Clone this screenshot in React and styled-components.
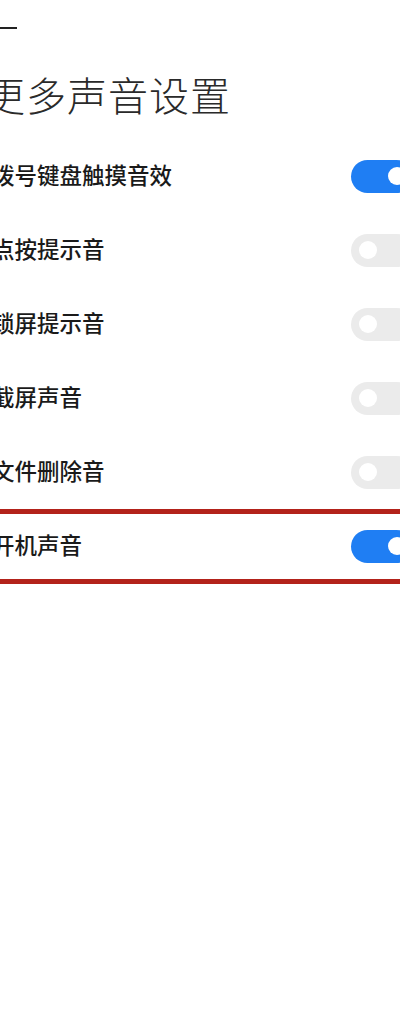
import React from "react";
import styled, { createGlobalStyle } from "styled-components";

const Global = createGlobalStyle`
  html, body { margin: 0; padding: 0; background: #ffffff; }
  body {
    width: 400px;
    min-height: 1011px;
    overflow: hidden;
    font-family: "Noto Sans CJK SC", "Noto Sans", sans-serif;
  }
`;

const Screen = styled.div`
  width: 400px;
  height: 1011px;
  overflow: hidden;
  background: #ffffff;
`;

const Content = styled.div`
  width: 416px;
  margin-left: -3px;
  display: flex;
  flex-direction: column;
`;

const TopBar = styled.div`
  height: 20px;
  padding-top: 18px;
  display: flex;
  align-items: center;
`;

const BackIcon = styled.svg`
  display: block;
  margin-left: -7px;
  width: 30px;
  height: 20px;
`;

const Title = styled.h1`
  margin: 36px 0 25px -12px;
  font-size: 40px;
  line-height: 40px;
  height: 40px;
  font-weight: 300;
  color: #2a2a2a;
  letter-spacing: 1px;
  white-space: nowrap;
`;

const List = styled.div`
  display: flex;
  flex-direction: column;
`;

const Row = styled.div`
  position: relative;
  height: 74px;
  display: flex;
  align-items: center;
  justify-content: space-between;

  ${(p) =>
    p.$highlight &&
    `
    &::after {
      content: "";
      position: absolute;
      left: -20px;
      right: -20px;
      top: 0;
      bottom: -1px;
      border-top: 5px solid #b3221a;
      border-bottom: 5px solid #b3221a;
      pointer-events: none;
    }
  `}
`;

const Label = styled.span`
  margin-left: -5px;
  padding-bottom: 4px;
  font-size: 22.5px;
  font-weight: 500;
  color: #1a1a1a;
  line-height: 30px;
  white-space: nowrap;
`;

const Toggle = styled.div`
  position: relative;
  width: 62px;
  height: 33px;
  border-radius: 17px;
  background: ${(p) => (p.$on ? "#1f7ef3" : "#ebebeb")};
  flex-shrink: 0;

  &::before {
    content: "";
    position: absolute;
    top: 7.5px;
    ${(p) => (p.$on ? "right: 7.5px;" : "left: 7.5px;")}
    width: 18px;
    height: 18px;
    border-radius: 50%;
    background: #ffffff;
  }
`;

const items = [
  { label: "拨号键盘触摸音效", on: true },
  { label: "点按提示音", on: false },
  { label: "锁屏提示音", on: false },
  { label: "截屏声音", on: false },
  { label: "文件删除音", on: false },
  { label: "开机声音", on: true, highlight: true },
];

export default function App() {
  return (
    <Screen>
      <Global />
      <Content>
        <TopBar>
          <BackIcon viewBox="0 0 30 20" fill="none">
            <path
              d="M1 10 H27 M1 10 L9 2 M1 10 L9 18"
              stroke="#222"
              strokeWidth="2"
              strokeLinecap="butt"
            />
          </BackIcon>
        </TopBar>
        <Title>更多声音设置</Title>
        <List>
          {items.map((it) => (
            <Row key={it.label} $highlight={it.highlight}>
              <Label>{it.label}</Label>
              <Toggle $on={it.on} />
            </Row>
          ))}
        </List>
      </Content>
    </Screen>
  );
}
